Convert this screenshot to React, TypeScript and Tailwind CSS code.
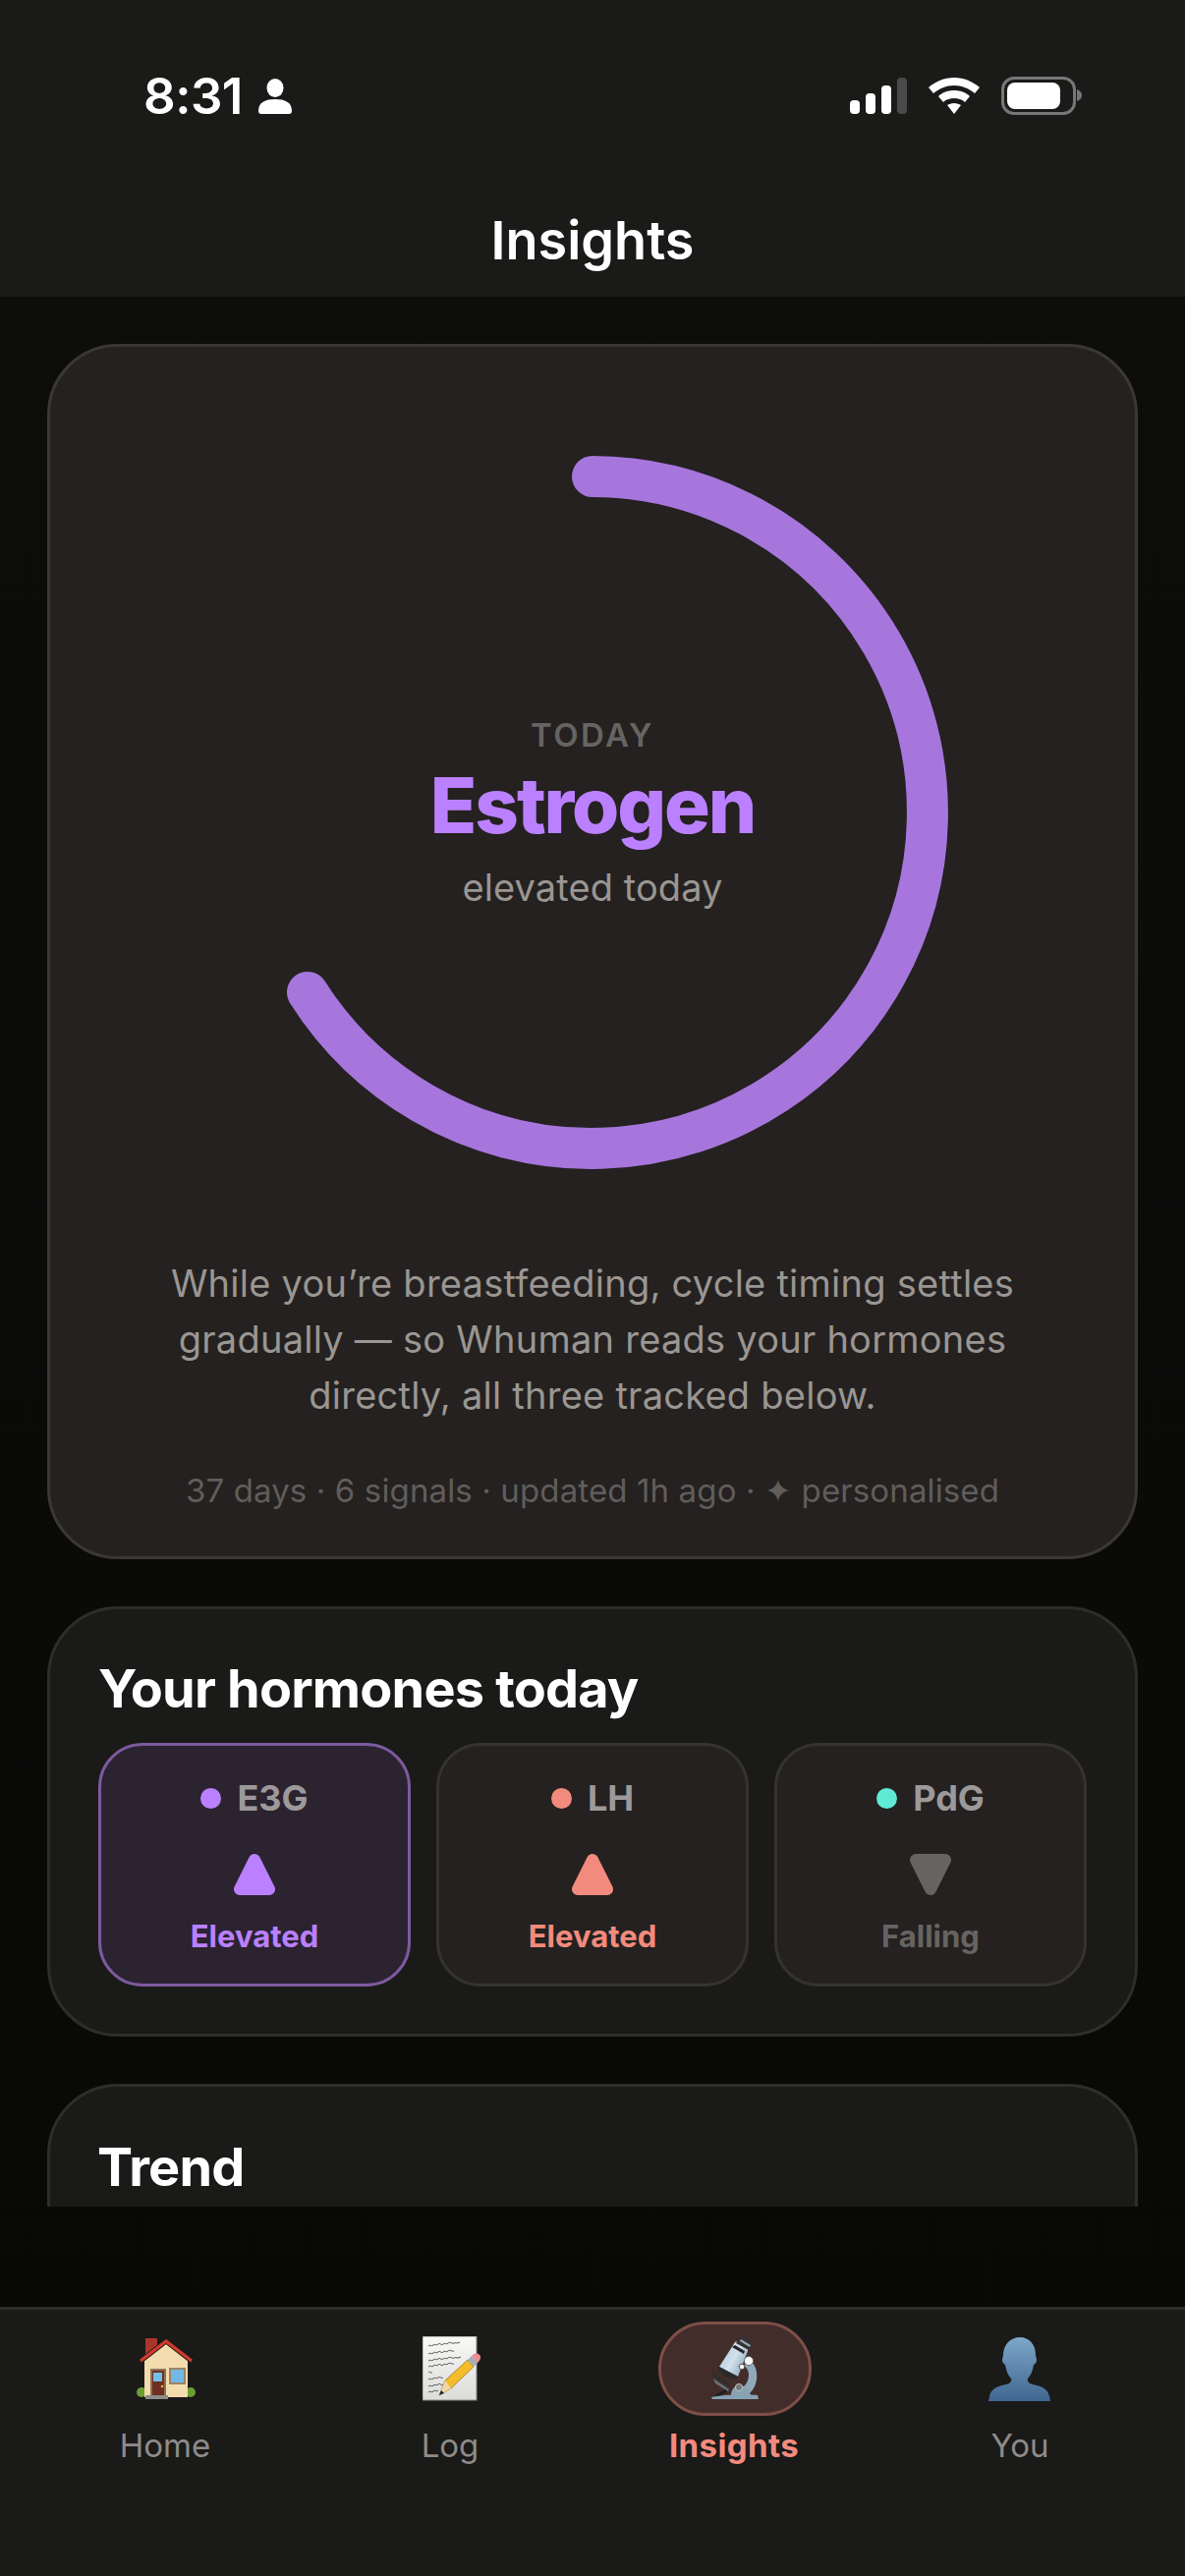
const hormones = [
  { name: "E3G", dot: "bg-[#bb80ff]", status: "Elevated", tone: "text-[#bb80ff]", fill: "#bb80ff", down: false, box: "bg-[#2b2330] border-[#7d5a9f]" },
  { name: "LH", dot: "bg-[#f28b7d]", status: "Elevated", tone: "text-[#f28b7d]", fill: "#f28b7d", down: false, box: "bg-[#242120] border-[#353231]" },
  { name: "PdG", dot: "bg-[#5eead4]", status: "Falling", tone: "text-[#666462]", fill: "#666462", down: true, box: "bg-[#242120] border-[#353231]" },
];

function StatusBar() {
  return (
    <div className="h-[198px] flex items-start justify-between pt-[78px] pl-[146px] pr-[105px]">
      <div className="flex items-center gap-[16px]">
        <span className="text-[51px] leading-[40px] font-semibold text-white tracking-[-0.5px]">8:31</span>
        <svg width="34" height="36" viewBox="0 0 34 36" fill="#fff">
          <ellipse cx="17" cy="9.5" rx="8.5" ry="9.5" />
          <path d="M0 33c0-9 7-12 17-12s17 3 17 12c0 2-1 3-3 3H3c-2 0-3-1-3-3z" />
        </svg>
      </div>
      <div className="flex items-start">
        <svg width="58" height="38" viewBox="0 0 58 38" className="mt-[1px]">
          <rect x="0" y="23" width="10" height="14" rx="4" fill="#fff" />
          <rect x="16" y="16" width="10" height="21" rx="4" fill="#fff" />
          <rect x="32" y="8" width="10" height="29" rx="4" fill="#fff" />
          <rect x="48" y="0" width="10" height="37" rx="4" fill="#4a4a4a" />
        </svg>
        <svg width="52" height="38" viewBox="0 0 52 38" fill="#fff" className="ml-[22px] mt-[1px]">
          <path d="M26 0c10 0 19 4 26 10l-5 6c-6-5-13-8-21-8S11 11 5 16L0 10C7 4 16 0 26 0z" />
          <path d="M26 13c6 0 12 2 16 6l-5 6c-3-3-7-4-11-4s-8 1-11 4l-5-6c4-4 10-6 16-6z" />
          <path d="M26 26c3 0 5 1 7 2l-7 9-7-9c2-1 4-2 7-2z" />
        </svg>
        <div className="ml-[22px] w-[76px] h-[39px] rounded-[13px] border-[3px] border-[#777] p-[3px]">
          <div className="w-[54px] h-[27px] rounded-[8px] bg-white" />
        </div>
        <svg width="5" height="12" viewBox="0 0 5 12" className="ml-[1px] mt-[13px]">
          <path d="M0 0c3 1 5 3 5 6s-2 5-5 6z" fill="#777" />
        </svg>
      </div>
    </div>
  );
}

function Ring() {
  return (
    <div className="relative w-[726px] h-[726px] mx-auto">
      <svg width="726" height="726" viewBox="0 0 726 726">
        <path
          d="M363 21 A342 342 0 1 1 73 546"
          fill="none"
          stroke="#a676dc"
          strokeWidth="42"
          strokeLinecap="round"
        />
      </svg>
      <div className="absolute inset-0 flex flex-col items-center pt-[264px]">
        <div className="text-[33px] leading-[40px] font-semibold tracking-[2.5px] text-[#666462]">TODAY</div>
        <div className="text-[78px] leading-[94px] font-extrabold tracking-[-2.1px] text-[#bb80ff] mt-[5px]">Estrogen</div>
        <div className="text-[38px] leading-[50px] text-[#9a9692] tracking-[0.1px] mt-[11px]">elevated today</div>
      </div>
    </div>
  );
}

function Trend({ fill, down }: { fill: string; down: boolean }) {
  return (
    <svg width="44" height="44" viewBox="0 0 44 44" className="mx-auto">
      <path
        d={down ? "M7 7 H37 L22 37 Z" : "M22 7 L37 37 H7 Z"}
        fill={fill}
        stroke={fill}
        strokeWidth="12"
        strokeLinejoin="round"
      />
    </svg>
  );
}

function HouseIcon() {
  return (
    <svg width="60" height="62" viewBox="0 0 60 62" className="ml-[2px]">
      <rect x="9" y="0" width="12" height="18" fill="#a8362c" />
      <circle cx="5" cy="55" r="5" fill="#6a9e35" />
      <circle cx="55" cy="55" r="5" fill="#6a9e35" />
      <path d="M8 22 30 5l22 17v38H8z" fill="#f3dcae" />
      <path d="M3 24 30 3l27 21" fill="none" stroke="#2b1a18" strokeWidth="5" />
      <path d="M4 23 30 3l26 20" fill="none" stroke="#d23b2f" strokeWidth="3" />
      <rect x="14" y="31" width="16" height="27" fill="#8c7358" />
      <rect x="16" y="33" width="12" height="25" fill="#6e2f20" />
      <rect x="17" y="35" width="9" height="9" fill="#74bfe8" />
      <circle cx="26" cy="49" r="1.2" fill="#f3c33d" />
      <rect x="33" y="30" width="17" height="17" fill="#9a8468" />
      <rect x="35" y="32" width="13" height="13" fill="#72b8e6" />
      <rect x="9" y="58" width="23" height="4" fill="#8d8d88" />
    </svg>
  );
}

function MemoIcon() {
  return (
    <svg width="60" height="66" viewBox="0 0 60 66" className="ml-[4px]">
      <defs>
        <linearGradient id="paper" x1="0" y1="0" x2="0" y2="1">
          <stop offset="0" stopColor="#f8f8f6" />
          <stop offset="1" stopColor="#dcdcda" />
        </linearGradient>
      </defs>
      <rect x="0" y="0" width="55" height="65" fill="url(#paper)" stroke="#8a8a88" strokeWidth="1" />
      <g fill="none" stroke="#3f3f3f" strokeWidth="0.9">
        <path d="M6 10c2-2 3 1 5-1s3 1 5-1 3 2 5 0 3 1 5-1 4 1 6 0 3 1 6-1" />
        <path d="M6 18c2-2 3 1 5-1s3 1 5-1 3 2 5 0 3 1 5-1 4 1 6 0" />
        <path d="M6 25c2-2 3 1 5-1s3 1 5-1 3 2 5 0 3 1 5-1 4 1 6 0 4 1 7-1" />
        <path d="M6 31c2-2 3 1 5-1s3 1 5-1 3 2 5 0 3 1 5-1 4 1 6 0" />
        <path d="M6 37c2-2 3 1 4 0" />
        <path d="M6 44c2-2 3 1 5-1s3 1 5-1 3 2 5 0" />
        <path d="M6 51c2-2 3 1 5-1s3 1 5-1 3 2 5 0 3 1 5-1" />
        <path d="M6 57c2-2 3 1 5-1s3 1 5-1" />
      </g>
      <path d="M17 60 23 45 46 24 52 31 29 53z" fill="#f3bd2a" stroke="#8a6a1c" strokeWidth="0.7" />
      <path d="M17 60 23 45 29 53z" fill="#f0d6a8" />
      <path d="M17 60 19 55 22 58z" fill="#222" />
      <path d="M46 24 50 20 56 27 52 31z" fill="#a4aeb6" />
      <path d="M50 20c3-3 6-3 8-1s1 5-2 8z" fill="#ee8d92" />
    </svg>
  );
}

function MicroscopeIcon() {
  return (
    <svg width="49" height="66" viewBox="0 0 49 66">
      <defs>
        <linearGradient id="tube" x1="0" y1="0.2" x2="1" y2="0.8">
          <stop offset="0" stopColor="#a9c5da" />
          <stop offset="0.5" stopColor="#d3e2ec" />
          <stop offset="1" stopColor="#7f9fb6" />
        </linearGradient>
      </defs>
      <path d="M38 24c7 4 9 12 8 20-1 6-3 10-7 14l-8-5c5-4 7-9 7-14 0-4-2-7-5-9z" fill="#8fa9ba" />
      <path d="M20 60c0-6 4-10 9-10s9 4 11 10z" fill="#8aa3b3" />
      <circle cx="28" cy="52" r="3.6" fill="#777" stroke="#b8c4cc" strokeWidth="1" />
      <path d="M1 36 19 49l-1 3L1 40z" fill="#2e2e2e" />
      <path d="M2 43 18 54l-1 2L4 48z" fill="#66737b" />
      <path d="M2 61 14 54l2 2-8 5z" fill="#1f1f1f" />
      <path d="M0 62c10-3 36-3 47-2l1 4H1z" fill="#86a3b5" />
      <path d="M8 31 24 6c1-1 2-1 3 0l9 6c1 1 1 2 1 3L27 41z" fill="url(#tube)" />
      <path d="M21 11 33 18l1-3-10-6z" fill="#262626" />
      <path d="M25 7 29 1l4-1 9 6-2 6-4 1z" fill="#333" />
      <path d="M30 3l10 6-1 2-10-6z" fill="#9aa5ab" />
      <path d="M8 31 27 41l-2 3c-6 0-14-4-18-9z" fill="#2a2a2a" />
      <circle cx="38" cy="25" r="4.6" fill="#f6f6f6" stroke="#555" strokeWidth="0.8" />
      <circle cx="31" cy="31" r="2.8" fill="#f6f6f6" stroke="#333" strokeWidth="0.8" />
    </svg>
  );
}

function BustIcon() {
  return (
    <svg width="64" height="65" viewBox="0 0 64 65">
      <defs>
        <linearGradient id="bust" x1="0" y1="0" x2="0" y2="1">
          <stop offset="0" stopColor="#7ea7cb" />
          <stop offset="1" stopColor="#3f6690" />
        </linearGradient>
      </defs>
      <path
        d="M32 0c10 0 16 8 16 18 0 2 1 3 1 5 0 2-1 4-3 5-1 6-3 11-6 14-1 3 1 5 5 6 9 2 15 4 17 12l1 5H0l1-5c2-8 8-10 17-12 4-1 6-3 5-6-3-3-5-8-6-14-2-1-3-3-3-5 0-2 1-3 1-5C15 8 22 0 32 0z"
        fill="url(#bust)"
      />
    </svg>
  );
}

const tabs = [
  { label: "Home", icon: <HouseIcon />, active: false },
  { label: "Log", icon: <MemoIcon />, active: false },
  { label: "Insights", icon: <MicroscopeIcon />, active: true },
  { label: "You", icon: <BustIcon />, active: false },
];

export default function App() {
  return (
    <div
      className="w-[1206px] h-[2622px] flex flex-col overflow-hidden bg-gradient-to-b from-[#0d0d0c] to-[#080807]"
      style={{ fontFamily: "Inter, 'Noto Sans', sans-serif" }}
    >
      <header className="h-[302px] bg-[#1a1a18]">
        <StatusBar />
        <h1 className="text-[54px] leading-[96px] font-semibold text-white text-center -mt-[1px]">Insights</h1>
      </header>

      <main className="h-[1944px] overflow-hidden px-[48px] pt-[48px] flex flex-col gap-[48px]">
        <section className="shrink-0 h-[1237px] rounded-[72px] border-[3px] border-[#3a3837] bg-[#242120] pt-[111px] px-[60px]">
          <Ring />
          <p className="mt-[88px] text-[38px] leading-[57px] text-[#9a9692] text-center tracking-[0.25px]">
            While you’re breastfeeding, cycle timing settles
            <br />
            gradually — so Whuman reads your hormones
            <br />
            directly, all three tracked below.
          </p>
          <p className="mt-[47px] text-[33px] leading-[42px] text-[#605d5b] text-center tracking-[0.13px]">
            37 days · 6 signals · updated 1h ago · ✦ personalised
          </p>
        </section>

        <section className="shrink-0 h-[438px] rounded-[72px] border-[3px] border-[#2f2d2c] bg-[#1a1a18] px-[49px] pt-[48px]">
          <h2 className="text-[54px] leading-[66px] font-bold text-white tracking-[-0.8px]">Your hormones today</h2>
          <div className="mt-[22px] grid grid-cols-3 gap-[26px]">
            {hormones.map((h) => (
              <div key={h.name} className={`h-[248px] rounded-[45px] border-[3px] pt-[32px] ${h.box}`}>
                <div className="flex items-center justify-center gap-[16px] h-[42px]">
                  <span className={`w-[21px] h-[21px] rounded-full ${h.dot}`} />
                  <span className="text-[36px] leading-[42px] font-bold text-[#9d999b]">{h.name}</span>
                </div>
                <div className="mt-[35px]">
                  <Trend fill={h.fill} down={h.down} />
                </div>
                <div className={`mt-[22px] text-center text-[31px] leading-[38px] font-bold ${h.tone}`}>{h.status}</div>
              </div>
            ))}
          </div>
        </section>

        <section className="shrink-0 h-[400px] rounded-[72px] border-[3px] border-[#2f2d2c] bg-[#1a1a18] px-[48px] pt-[49px]">
          <h2 className="text-[54px] leading-[66px] font-bold text-white tracking-[-0.8px]">Trend</h2>
        </section>
      </main>

      <div className="h-[102px]" />

      <nav className="flex-1 border-t-[3px] border-[#2f2d2c] bg-[#1a1a18] grid grid-cols-4 px-[23px] pt-[12px]">
        {tabs.map((t) => (
          <div key={t.label} className="flex flex-col items-center">
            <div
              className={`w-[156px] h-[96px] rounded-[48px] flex items-center justify-center ${
                t.active ? "bg-[#432d2a] border-[3px] border-[#7d4f47]" : ""
              }`}
            >
              {t.icon}
            </div>
            <span
              className={`mt-[9px] text-[33px] leading-[42px] ${
                t.active ? "font-bold tracking-[0.4px] text-[#f28b7d] -ml-[2px]" : "text-[#8e8b88]"
              }`}
            >
              {t.label}
            </span>
          </div>
        ))}
      </nav>
    </div>
  );
}
